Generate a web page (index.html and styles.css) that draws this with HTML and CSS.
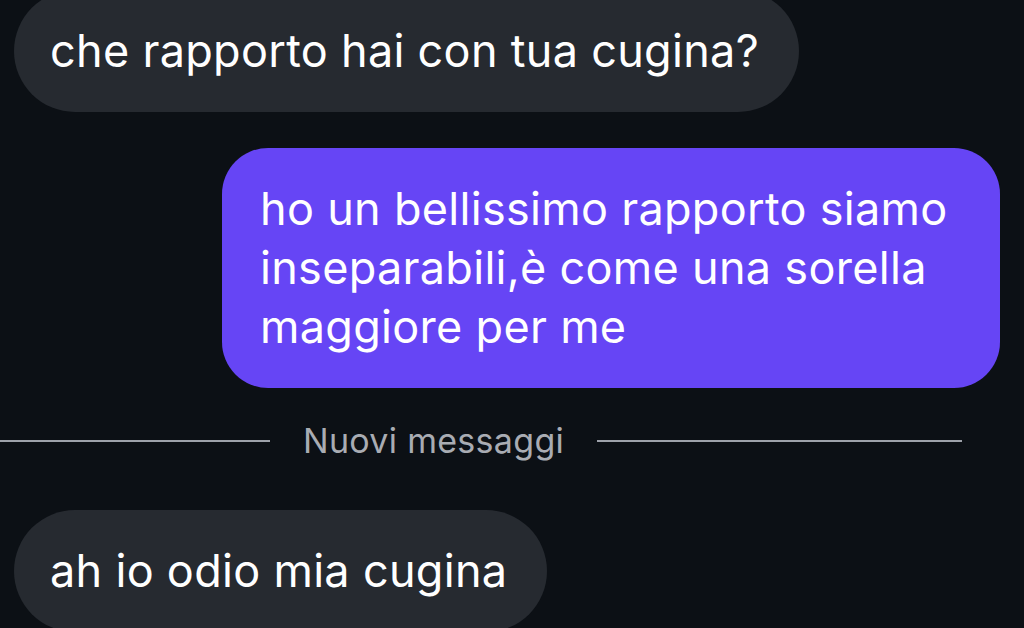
FILE: index.html
```html
<!DOCTYPE html>
<html lang="it">
<head>
<meta charset="utf-8">
<title>Chat</title>
<link rel="stylesheet" href="styles.css">
</head>
<body>
<main class="thread">
  <div class="row row-in row-first">
    <div class="bubble bubble-in">che rapporto hai con tua cugina?</div>
  </div>
  <div class="row row-out">
    <div class="bubble bubble-out">ho un bellissimo rapporto siamo<br>inseparabili,è come una sorella<br>maggiore per me</div>
  </div>
  <div class="divider">
    <span class="divider-line divider-left"></span>
    <span class="divider-text">Nuovi messaggi</span>
    <span class="divider-line divider-right"></span>
  </div>
  <div class="row row-in">
    <div class="bubble bubble-in bubble-last">ah io odio mia cugina</div>
  </div>
</main>
</body>
</html>
```
FILE: styles.css
```css
html, body {
  margin: 0;
  padding: 0;
  background: #0c1015;
  width: 1024px;
  height: 628px;
  overflow: hidden;
}

.thread {
  display: flex;
  flex-direction: column;
  font-family: Inter, "Liberation Sans", sans-serif;
  color: #ffffff;
}

.row {
  display: flex;
}

.row-in {
  justify-content: flex-start;
  padding-left: 14px;
}

.row-out {
  justify-content: flex-end;
  padding-right: 24px;
  margin-top: 36px;
}

.row-first {
  margin-top: -10px;
}

.bubble {
  font-size: 45px;
  letter-spacing: 0.3px;
  line-height: 59px;
  white-space: nowrap;
}

.bubble-in {
  background: #262a30;
  border-radius: 61px;
  padding: 31px 40px 32px 36px;
}

.bubble-out {
  background: #6645f5;
  border-radius: 46px;
  width: 778px;
  box-sizing: border-box;
  padding: 31px 38px 32px 38px;
}

.divider {
  display: flex;
  align-items: center;
  margin-top: 38px;
  height: 30px;
}

.divider-line {
  display: block;
  height: 2px;
  background: #9ea2aa;
}

.divider-left {
  width: 270px;
}

.divider-right {
  width: 365px;
}

.divider-text {
  font-size: 34px;
  letter-spacing: 0.3px;
  color: #a9acb3;
  margin: 0 33px;
  line-height: 30px;
}

.bubble-last {
  margin-top: 54px;
}
```
